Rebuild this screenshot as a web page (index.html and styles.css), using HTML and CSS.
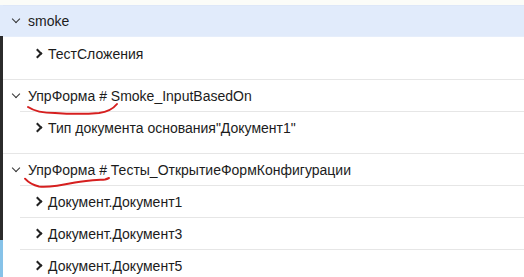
FILE: index.html
```html
<!DOCTYPE html>
<html lang="ru">
<head>
    <meta charset="UTF-8">
    <title>Tests</title>
    <link rel="stylesheet" href="styles.css">
</head>
<body>
    <div class="window">
        <div class="edge">
            <span class="edge-top"></span>
            <span class="edge-sel"></span>
            <span class="edge-dark"></span>
            <span class="edge-blue"></span>
        </div>
        <div class="tree">
            <div class="top-strip"></div>

            <div class="group">
                <div class="node-header selected">
                    <span class="chev-down"></span>
                    <span class="label">smoke</span>
                </div>
                <div class="node-child">
                    <span class="chev-right"></span>
                    <span class="label">ТестСложения</span>
                </div>
            </div>

            <div class="group">
                <div class="node-header">
                    <span class="chev-down"></span>
                    <span class="label">УпрФорма # Smoke_InputBasedOn</span>
                    <svg class="scribble" width="130" height="40" viewBox="0 0 130 40">
                        <path d="M25,27 C31,31 40,33 52,33 C66,34 84,34 96,33 C104,32 110,29 114,24" />
                    </svg>
                </div>
                <div class="node-child">
                    <span class="chev-right"></span>
                    <span class="label">Тип документа основания"Документ1"</span>
                </div>
            </div>

            <div class="group">
                <div class="node-header">
                    <span class="chev-down"></span>
                    <span class="label">УпрФорма # Тесты_ОткрытиеФормКонфигурации</span>
                    <svg class="scribble" width="130" height="40" viewBox="0 0 130 40">
                        <path d="M22,24.7 C25,28 29,31 36,32.5 C46,33.5 60,31 72,28.5 C84,26.5 96,26 102,25.5 C104,25 105,24.5 106,24" />
                    </svg>
                </div>
                <div class="node-child">
                    <span class="chev-right"></span>
                    <span class="label">Документ.Документ1</span>
                </div>
                <div class="node-child">
                    <span class="chev-right"></span>
                    <span class="label">Документ.Документ3</span>
                </div>
                <div class="node-child">
                    <span class="chev-right"></span>
                    <span class="label">Документ.Документ5</span>
                </div>
            </div>
        </div>
    </div>
</body>
</html>
```

FILE: styles.css
```css
body {
    margin: 0;
    background-color: #fff;
    font-family: 'Liberation Sans', Arial, sans-serif;
    font-size: 14px;
    color: #1c1c1c;
    overflow: hidden;
}

.window {
    display: flex;
    height: 277px;
    overflow: hidden;
}

/* left border of the neighbouring window */
.edge {
    display: flex;
    flex-direction: column;
    width: 3px;
    flex-shrink: 0;
}

.edge-top {
    height: 5px;
    background-color: #fbfcf8;
}

.edge-sel {
    height: 31px;
    background-color: #e1ebfb;
}

.edge-dark {
    height: 204px;
    background-color: #2b2b2b;
}

.edge-blue {
    flex: 1;
    background-color: #86c2e8;
}

.tree {
    flex: 1;
}

.top-strip {
    height: 5px;
    background-color: #fbfcf8;
}

.group {
    padding-bottom: 10px;
    border-bottom: 1px solid #e6e6e6;
}

.group:last-child {
    border-bottom: none;
}

.node-header {
    position: relative;
    display: flex;
    align-items: center;
    height: 31px;
    padding-left: 8px;
}

.node-header.selected {
    height: 32px;
    box-sizing: border-box;
    background-color: #e1ebfb;
    border-top: 1px solid #dde7f8;
    border-bottom: 1px solid #e6eefb;
}

.node-child {
    display: flex;
    align-items: center;
    height: 31px;
    margin-left: 17px;
    padding-left: 14px;
    border-top: 1px solid #e6e6e6;
}

.selected + .node-child {
    border-top-color: transparent;
}

.chev-down {
    width: 5px;
    height: 5px;
    border-right: 1.5px solid #333;
    border-bottom: 1.5px solid #333;
    transform: rotate(45deg);
    margin: -4px 9px 0 2px;
}

.chev-right {
    width: 5px;
    height: 5px;
    border-right: 2px solid #222;
    border-bottom: 2px solid #222;
    transform: rotate(-45deg);
    margin: 0 7px 0 0;
}

.label {
    white-space: nowrap;
    line-height: 18px;
}

.scribble {
    position: absolute;
    left: 0;
    top: 0;
    overflow: visible;
    pointer-events: none;
}

.scribble path {
    fill: none;
    stroke: #d61f1f;
    stroke-width: 2;
    stroke-linecap: round;
}
```
